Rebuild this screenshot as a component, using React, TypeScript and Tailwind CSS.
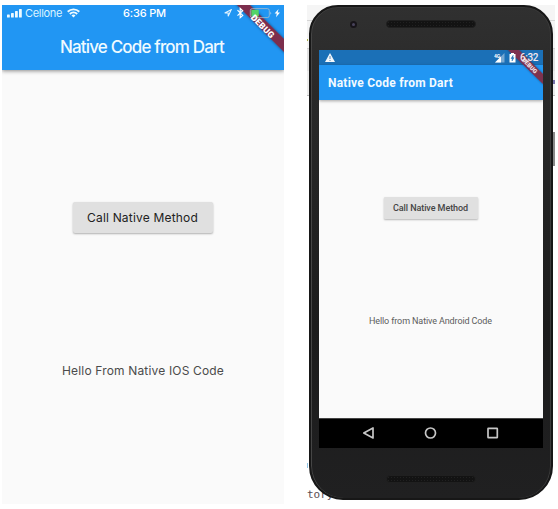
import React from "react";

function Label({ w, className, children }: { w: number; className: string; children: string }) {
  const ref = React.useRef<HTMLSpanElement>(null);
  const [spacing, setSpacing] = React.useState(0);
  React.useLayoutEffect(() => {
    if (ref.current) setSpacing((w - ref.current.getBoundingClientRect().width) / children.length);
  }, []);
  return (
    <span ref={ref} className={`inline-block whitespace-nowrap ${className}`} style={{ letterSpacing: spacing }}>
      {children}
    </span>
  );
}

function IosPhone() {
  return (
    <section className="relative flex h-[499px] w-[282px] flex-col overflow-hidden bg-[#fafafa] font-['Inter',sans-serif]">
      <header className="h-[65px] shrink-0 bg-[#2196f3] text-white shadow-[0_1px_4px_rgba(0,0,0,0.45)]">
        <div className="flex h-4 items-center pl-[5px]">
          <svg width="15" height="9" viewBox="0 0 15 9" fill="#eefaff">
            <rect y="5.5" width="2.8" height="3" rx=".6" />
            <rect x="4" y="4" width="2.8" height="4.5" rx=".6" />
            <rect x="8" y="2" width="2.8" height="6.5" rx=".6" />
            <rect x="12" width="2.8" height="8.5" rx=".6" />
          </svg>
          <div className="ml-[3px] w-[42px] text-[11px] leading-4 text-[#dcf4ff]"><Label w={37} className="">Cellone</Label></div>
          <svg width="13" height="10" viewBox="0 0 13 10" fill="none" stroke="#eefaff" strokeWidth="1.9">
            <path d="M.7 3.7a8.4 8.4 0 0 1 11.6 0M2.8 6a5.4 5.4 0 0 1 7.4 0" />
            <path d="M4.5 7.5a2.8 2.8 0 0 1 4 0l-2 2z" fill="#eefaff" stroke="none" />
          </svg>
          <div className="ml-[43px] w-[101px] text-[11px] font-medium leading-4"><Label w={43} className="">6:36 PM</Label></div>
          <svg width="8" height="8" viewBox="0 0 9 9" fill="none" stroke="#e4f4ff" strokeWidth="1.2">
            <path d="M.8 4.4 8.1.8 4.7 8.1V4.5z" />
          </svg>
        </div>
        <h1 className="mt-[14px] pl-[58px] text-[17px] font-medium leading-6 text-[#effaff]"><Label w={164} className="">Native Code from Dart</Label></h1>
      </header>
      <button className="ml-[71px] mt-[132px] h-[31px] w-[140px] shrink-0 rounded-[2px] bg-[#e0e0e0] pl-[14px] text-left text-[12px] leading-[30px] text-[#222] shadow-[0_1px_2px_rgba(0,0,0,0.3)]"><Label w={111} className="">Call Native Method</Label></button>
      <p className="mt-[128px] pl-[60px] text-[12px] leading-5 text-[#4b4b4b]"><Label w={162} className="">Hello From Native IOS Code</Label></p>
      <svg className="absolute right-0 top-0" width="60" height="60" viewBox="0 0 60 60">
        <defs><filter id="ios-shadow" x="-20%" y="-20%" width="140%" height="140%"><feDropShadow dx="0" dy="0" stdDeviation="1.6" floodOpacity=".5" /></filter></defs>
        <path d="M11-2h13L62 36v13z" fill="#7c2f4d" filter="url(#ios-shadow)" />
        <path d="m13.5 5.2 5.2 5.2-2.5 2.3V3.3l2.5 2.4-5.2 4.9" fill="none" stroke="white" strokeWidth="1.2" />
        <rect x="26.3" y="3.6" width="19" height="9" rx="2" fill="none" stroke="#a9bccb" strokeWidth=".8" />
        <path d="M46.4 6.4q1.8 1.7 0 3.4z" fill="#a9cdeb" />
        <rect x="27.3" y="4.8" width="7.5" height="6.6" rx=".6" fill="#52d468" />
        <path d="m54.6 4-4 4.5h2.2L52 12.2l4-4.7h-2.4z" fill="white" />
        <text x="38.2" y="21.8" transform="rotate(45 38.2 21.8)" textAnchor="middle" dominantBaseline="middle" textLength="29" fontSize="8.8" fontWeight="900" fontFamily="Roboto, sans-serif" fill="white">DEBUG</text>
      </svg>
    </section>
  );
}

function Speaker() {
  return <div className="h-[8px] w-[90px] rounded-full border border-[#202020] bg-[#131313] bg-[radial-gradient(#212121_0.6px,transparent_0.7px)] bg-[size:3px_3px]" />;
}

function AndroidScreen() {
  return (
    <div className="relative flex h-[398px] w-[224px] flex-col overflow-hidden bg-[#fafafa] font-['Roboto',sans-serif]">
      <div className="flex h-[15px] shrink-0 items-center bg-[#1b70b7] pl-[6px] text-white">
        <svg width="10" height="9" viewBox="0 0 10 9"><path d="M5 0 10 9H0z" fill="#f4f8fc" /><path d="M5 3v3M5 7v1" stroke="#5e89b1" strokeWidth="1" /></svg>
        <svg className="ml-[159px]" width="11" height="10" viewBox="0 0 11 10"><path d="M10.5 0v9.5H1z" fill="#79a9d3" /><path d="M7 3.5v6H1z" fill="white" /><text x="0" y="4.5" fontSize="5" fontWeight="700" fontFamily="Roboto, sans-serif" fill="white">4G</text></svg>
        <svg className="relative z-10 ml-1" width="7" height="10" viewBox="0 0 7 10"><path d="M2 0h3v1h1.5v8.5h-6V1H2z" fill="white" /><path d="M4.2 2.3 2 5.5h1.4L3 8l2-3.3H3.8z" fill="#1b70b7" stroke="#1b70b7" strokeWidth=".5" /></svg>
        <div className="relative z-10 ml-1 text-[10px] font-medium leading-[15px] text-[#f3e8ee]"><Label w={18} className="">6:32</Label></div>
      </div>
      <header className="h-[35px] shrink-0 bg-[#2196f3] pl-[9px] text-[12px] font-bold leading-[36px] text-[#f2faff] shadow-[0_1px_3px_rgba(0,0,0,0.35)]"><Label w={125} className="">Native Code from Dart</Label></header>
      <button className="ml-[65px] mt-[97px] h-[22px] w-[94px] shrink-0 rounded-[1px] bg-[#e0e0e0] pl-[9px] text-left text-[9px] font-medium leading-[22px] text-[#444] shadow-[0_1px_2px_rgba(0,0,0,0.28)]"><Label w={75} className="">Call Native Method</Label></button>
      <p className="mt-[94px] pl-[50px] text-[9px] leading-[16px] text-[#5c5c5c]"><Label w={123} className="">Hello from Native Android Code</Label></p>
      <nav className="mt-auto h-[30px] border-t border-[#444] bg-black">
        <svg width="224" height="29" viewBox="0 0 224 29" fill="none" stroke="#c6c6c6" strokeWidth="1.7">
          <path d="M54 9v10l-9.2-5z" strokeLinejoin="round" /><circle cx="111.5" cy="14" r="5" /><rect x="169" y="9.3" width="9.3" height="9.4" rx=".5" />
        </svg>
      </nav>
      <svg className="absolute right-0 top-0" width="38" height="38" viewBox="0 0 38 38">
        <defs><filter id="android-shadow"><feDropShadow dx="0" dy="0" stdDeviation="1" floodOpacity=".45" /></filter></defs>
        <path d="M2-1h11L39 25v10z" fill="#7d3050" filter="url(#android-shadow)" />
        <text x="24.3" y="16" transform="rotate(45 24.3 16)" textAnchor="middle" dominantBaseline="middle" textLength="19" fontSize="6" fontWeight="900" fontFamily="Roboto, sans-serif" fill="#f3e5eb">DEBUG</text>
      </svg>
    </div>
  );
}

export default function App() {
  return (
    <main className="flex h-[509px] w-[558px] items-start overflow-hidden bg-white pl-[2px] pt-[5px]">
      <IosPhone />
      <section className="relative ml-[23px] h-[499px] w-[248px] overflow-hidden bg-white">
        <div className="flex flex-col">
          <div className="h-4 border-b border-[#d5d5d5] bg-[#f5f5f5]" />
          <div className="h-7 border-b border-[#d0d0d0] bg-[#f3f3f3]" />
          <div className="h-[22px] bg-[#e2e2e2]" />
          <div className="h-[25px] border-b border-[#bbb] bg-[#ececec]" />
          <div className="h-[36px] bg-white" />
          <div className="ml-auto h-[34px] w-[2px] bg-[#888]" />
        </div>
        <span className="absolute left-0 top-[484px] font-['DejaVu_Sans_Mono',monospace] text-[11px] leading-3 text-[#594d52]">tory</span>
        <span className="absolute left-0 top-[34px] h-[2px] w-px bg-[#aab044]" />
        <span className="absolute left-0 top-[458px] h-[5px] w-px bg-[#8fc3e4]" />
        <span className="absolute right-0 top-[75px] h-1 w-[2px] bg-[#7772aa]" />
        <div className="absolute left-[2px] top-0 flex h-[495px] w-[244px] flex-col rounded-t-[29px] rounded-b-[34px] border-2 border-[#171717] bg-[linear-gradient(to_bottom,#303030,#292929_18%,#1c1c1c_65%,#202021)] pl-[8px] shadow-[inset_1px_0_0_#454545,inset_-1px_0_0_#3b3b3b,inset_0_1px_0_#383838]">
          <div className="flex h-[43px] shrink-0 items-start pt-[13px]">
            <div className="ml-[31px] mt-[1px] flex h-[7px] w-[7px] items-center justify-center rounded-full bg-[#171419]"><span className="h-[3px] w-[3px] rounded-full bg-[#49445c]" /></div>
            <div className="ml-[29px]"><Speaker /></div>
          </div>
          <AndroidScreen />
          <div className="ml-[67px] mt-[27px]"><Speaker /></div>
        </div>
      </section>
    </main>
  );
}
